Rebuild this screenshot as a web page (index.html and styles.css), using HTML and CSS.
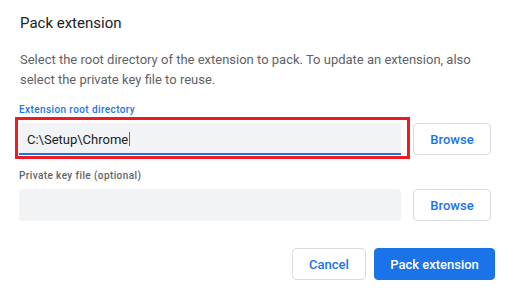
FILE: index.html
```html
<!DOCTYPE html>
<html lang="en">
<head>
    <meta charset="UTF-8">
    <meta name="viewport" content="width=device-width, initial-scale=1.0">
    <title>Pack extension</title>
    <link rel="stylesheet" href="styles.css">
</head>
<body>

<div class="dialog">
    <h2 class="title">Pack extension</h2>
    <p class="description">Select the root directory of the extension to pack. To update an extension, also select the private key file to reuse.</p>

    <div class="field">
        <div class="label label-active">Extension root directory</div>
        <div class="field-row">
            <div class="input input-focused">
                <span class="value">C:\Setup\Chrome</span><span class="caret"></span>
                <div class="highlight"></div>
            </div>
            <button class="btn">Browse</button>
        </div>
    </div>

    <div class="field">
        <div class="label">Private key file (optional)</div>
        <div class="field-row">
            <div class="input"></div>
            <button class="btn">Browse</button>
        </div>
    </div>

    <div class="footer">
        <button class="btn">Cancel</button>
        <button class="btn btn-primary">Pack extension</button>
    </div>
</div>

</body>
</html>
```

FILE: styles.css
```css
body {
    margin: 0;
    font-family: Roboto, "Liberation Sans", sans-serif;
    background: #fff;
    color: #202124;
}
.dialog {
    width: 508px;
    height: 290px;
    box-sizing: border-box;
    padding: 13px 13px 0 19px;
    display: flex;
    flex-direction: column;
}
.title {
    margin: 0 0 0 1px;
    font-size: 15px;
    font-weight: 400;
    line-height: 20px;
}
.description {
    margin: 17px 0 0 1px;
    font-size: 13px;
    line-height: 20px;
    color: #5f6368;
}
.field {
    display: flex;
    flex-direction: column;
    gap: 8px;
    margin-top: 16px;
}
.field:first-of-type {
    margin-top: 15px;
}
.label {
    font-size: 10px;
    font-weight: 500;
    letter-spacing: 0.4px;
    line-height: 10px;
    color: #5f6368;
}
.label-active {
    color: #1a73e8;
}
.field-row {
    display: flex;
    gap: 12px;
    width: 472px;
}
.input {
    flex: 1;
    height: 32px;
    box-sizing: border-box;
    background: #f1f3f4;
    border-radius: 4px;
    padding: 0 8px;
    display: flex;
    align-items: center;
    font-size: 13px;
    position: relative;
}
.input-focused {
    border-bottom: 2px solid #1a73e8;
    border-radius: 4px 4px 0 0;
    padding-top: 2px;
}
.caret {
    display: inline-block;
    width: 1px;
    height: 14px;
    margin-left: 1px;
    background: #1a73e8;
}
.highlight {
    position: absolute;
    left: -4px;
    top: -6px;
    width: 395px;
    height: 42px;
    box-sizing: border-box;
    border: 3px solid #ed1c24;
}
.btn {
    height: 32px;
    box-sizing: border-box;
    padding: 0;
    border: 1px solid #dadce0;
    border-radius: 4px;
    background: #fff;
    color: #1a73e8;
    font-family: inherit;
    font-size: 13px;
    font-weight: 500;
    white-space: nowrap;
}
.field-row .btn {
    width: 78px;
}
.footer {
    display: flex;
    justify-content: flex-end;
    gap: 8px;
    margin-top: 27px;
}
.footer .btn {
    width: 74px;
}
.footer .btn-primary {
    width: 121px;
    background: #1a73e8;
    border-color: #1a73e8;
    color: #fff;
}
```
